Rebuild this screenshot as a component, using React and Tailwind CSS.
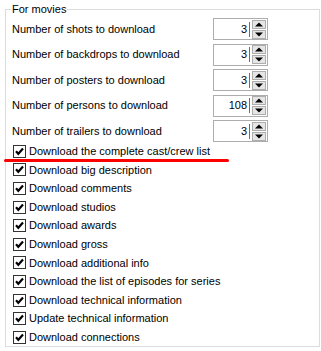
import React from 'react';

const numberRows = [
  { label: 'Number of shots to download', value: '3' },
  { label: 'Number of backdrops to download', value: '3' },
  { label: 'Number of posters to download', value: '3' },
  { label: 'Number of persons to download', value: '108' },
  { label: 'Number of trailers to download', value: '3' },
];

const checkRows = [
  'Download the complete cast/crew list',
  'Download big description',
  'Download comments',
  'Download studios',
  'Download awards',
  'Download gross',
  'Download additional info',
  'Download the list of episodes for series',
  'Download technical information',
  'Update technical information',
  'Download connections',
];

function Arrow({ up }) {
  return (
    <svg width="12" height="7" viewBox="0 0 12 7" className="block">
      {up ? <path d="M2 5.5 L6 1.5 L10 5.5 Z" fill="#000" /> : <path d="M2 1.5 L6 5.5 L10 1.5 Z" fill="#000" />}
    </svg>
  );
}

function SpinBox({ value }) {
  return (
    <div className="flex items-center w-[55px] h-[22px] border border-[#adadad] bg-white">
      <span className="flex-1 text-right leading-none">{value}</span>
      <div className="w-px h-[15px] bg-[#6d6d6d] ml-[2px]" />
      <div className="flex flex-col ml-[3px] mr-[2px] gap-px">
        <div className="w-[12px] h-[7px] bg-[#e5e5e5] border border-[#adadad] flex items-center justify-center box-content -mx-px">
          <Arrow up />
        </div>
        <div className="w-[12px] h-[7px] bg-[#e5e5e5] border border-[#adadad] flex items-center justify-center box-content -mx-px">
          <Arrow />
        </div>
      </div>
    </div>
  );
}

function CheckBox() {
  return (
    <div className="w-[13px] h-[13px] border border-[#333] bg-white shrink-0 flex items-center justify-center">
      <svg width="11" height="11" viewBox="0 0 11 11">
        <path d="M2 5.3 L4.3 7.8 L9 2.6" fill="none" stroke="#000" strokeWidth="2.2" />
      </svg>
    </div>
  );
}

export default function App() {
  return (
    <div
      className="w-[321px] h-[351px] bg-white text-black text-[11px] overflow-hidden relative"
      style={{ fontFamily: '"Liberation Sans", Arial, sans-serif' }}
    >
      {/* Group box */}
      <div className="absolute left-[5px] top-[9px] w-[315px] h-[338px] border border-[#dcdcdc]">
        <span className="absolute left-[5px] -top-[9px] bg-white px-px leading-[16px]">For movies</span>

        <div className="flex flex-col pt-[8px] pl-[6px]">
          {/* Number rows */}
          <div className="flex flex-col gap-[3.5px]">
            {numberRows.map((row) => (
              <div key={row.label} className="flex items-center h-[22px]">
                <span className="w-[201px]">{row.label}</span>
                <SpinBox value={row.value} />
              </div>
            ))}
          </div>

          {/* Check rows */}
          <div className="flex flex-col mt-[0px] pl-[1px]">
            {checkRows.map((label) => (
              <div key={label} className="flex items-center h-[18.6px] gap-[3px]">
                <CheckBox />
                <span>{label}</span>
              </div>
            ))}
          </div>
        </div>

        {/* red underline marker */}
        <div className="absolute left-[-2px] top-[149px] w-[225px] h-[3px] bg-[#ff0000] rounded-sm" />
      </div>
    </div>
  );
}
